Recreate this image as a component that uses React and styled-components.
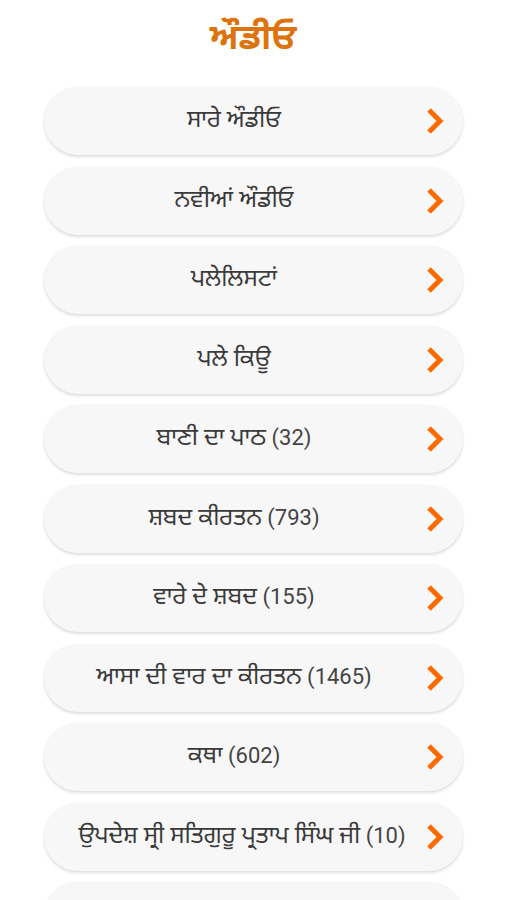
import React from "react";
import styled, { createGlobalStyle } from "styled-components";

const Global = createGlobalStyle`
  html, body { margin: 0; padding: 0; background: #ffffff; }
  body { font-family: Roboto, "Noto Sans", "Noto Sans Gurmukhi", sans-serif; }
`;

const Page = styled.div`
  width: 506px;
  height: 900px;
  overflow: hidden;
  display: flex;
  flex-direction: column;
  align-items: center;
  background: #fff;
`;

const Title = styled.h1`
  margin: 16px 0 0 0;
  height: 44px;
  line-height: 44px;
  font-size: 35px;
  font-weight: 700;
  color: #dc730c;
  text-align: center;
`;

const List = styled.div`
  margin-top: 27px;
  display: flex;
  flex-direction: column;
  gap: 11.5px;
  width: 419px;
`;

const Card = styled.div`
  height: 68px;
  border-radius: 34px;
  background: #f7f7f7;
  box-shadow: 0 2px 3px rgba(0, 0, 0, 0.12), 0 0 2px rgba(0, 0, 0, 0.05);
  display: flex;
  align-items: center;
  flex-shrink: 0;
`;

const Label = styled.span`
  flex: 1;
  font-size: 24px;
  font-weight: 400;
  color: #3a3a3a;
  text-align: center;
  white-space: nowrap;
  padding-left: ${(p) => p.$pad || 0}px;
`;

const Count = styled.span`
  font-size: 22px;
  font-weight: 400;
  color: #444;
`;

const Chevron = styled.svg`
  flex: none;
  width: 20px;
  height: 28px;
  margin-right: 18px;
`;

const Arrow = () => (
  <Chevron viewBox="0 0 20 28">
    <path d="M4 3 L15 14 L4 25" fill="none" stroke="#ff6a00" strokeWidth="5" strokeLinecap="butt" strokeLinejoin="miter" />
  </Chevron>
);

const items = [
  ["ਸਾਰੇ ਔਡੀਓ"],
  ["ਨਵੀਆਂ ਔਡੀਓ"],
  ["ਪਲੇਲਿਸਟਾਂ"],
  ["ਪਲੇ ਕਿਊ"],
  ["ਬਾਣੀ ਦਾ ਪਾਠ", "32"],
  ["ਸ਼ਬਦ ਕੀਰਤਨ", "793"],
  ["ਵਾਰੇ ਦੇ ਸ਼ਬਦ", "155"],
  ["ਆਸਾ ਦੀ ਵਾਰ ਦਾ ਕੀਰਤਨ", "1465"],
  ["ਕਥਾ", "602"],
  ["ਉਪਦੇਸ਼ ਸ੍ਰੀ ਸਤਿਗੁਰੂ ਪ੍ਰਤਾਪ ਸਿੰਘ ਜੀ", "10", 16],
  [""],
];

export default function App() {
  return (
    <>
      <Global />
      <Page>
        <Title>ਔਡੀਓ</Title>
        <List>
          {items.map(([t, n, pad], i) => (
            <Card key={i}>
              <Label $pad={pad}>
                {t}
                {n && <Count> ({n})</Count>}
              </Label>
              {t && <Arrow />}
            </Card>
          ))}
        </List>
      </Page>
    </>
  );
}
